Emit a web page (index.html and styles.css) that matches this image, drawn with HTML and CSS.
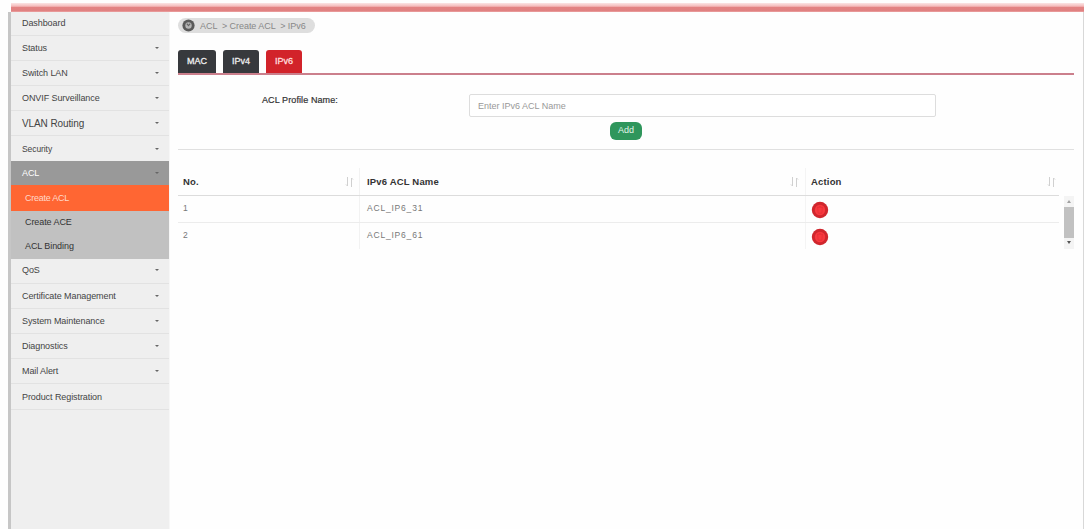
FILE: index.html
```html
<!DOCTYPE html>
<html lang="en">
<head>
    <meta charset="UTF-8">
    <meta name="viewport" content="width=device-width, initial-scale=1.0">
    <title>ACL - Create ACL - IPv6</title>
    <link rel="stylesheet" href="styles.css">
</head>
<body>
    <div class="page">
        <div class="topbar"></div>
        <div class="layout">
            <ul class="sidebar">
                <li class="first"><span>Dashboard</span></li>
                <li><span>Status</span><i class="caret"></i></li>
                <li><span>Switch LAN</span><i class="caret"></i></li>
                <li><span>ONVIF Surveillance</span><i class="caret"></i></li>
                <li class="large"><span>VLAN Routing</span><i class="caret"></i></li>
                <li class="small"><span>Security</span><i class="caret"></i></li>
                <li class="open"><span>ACL</span><i class="caret"></i></li>
                <li class="sub active"><span>Create ACL</span></li>
                <li class="sub"><span>Create ACE</span></li>
                <li class="sub"><span>ACL Binding</span></li>
                <li class="qos"><span>QoS</span><i class="caret"></i></li>
                <li><span>Certificate Management</span><i class="caret"></i></li>
                <li><span>System Maintenance</span><i class="caret"></i></li>
                <li><span>Diagnostics</span><i class="caret"></i></li>
                <li><span>Mail Alert</span><i class="caret"></i></li>
                <li class="last"><span>Product Registration</span></li>
            </ul>

            <div class="content">
                <div class="breadcrumb">
                    <svg width="13" height="13" viewBox="0 0 13 13">
                        <circle cx="6.5" cy="6.5" r="6.1" fill="#5a5a5a"/>
                        <circle cx="6.5" cy="6.5" r="3.2" fill="#b5b5b5"/>
                        <path d="M4.8 4.6l1.7 2 1.7-2" fill="none" stroke="#666" stroke-width="1.2"/>
                    </svg>
                    <span>ACL &nbsp;&gt; Create ACL &nbsp;&gt; IPv6</span>
                </div>

                <div class="tabs">
                    <a class="tab mac">MAC</a>
                    <a class="tab">IPv4</a>
                    <a class="tab current">IPv6</a>
                </div>

                <div class="profile-form">
                    <div class="form-row">
                        <label for="aclName">ACL Profile Name:</label>
                        <input id="aclName" type="text" placeholder="Enter IPv6 ACL Name">
                    </div>
                    <button class="add-btn">Add</button>
                </div>

                <div class="acl-table">
                    <div class="table-row table-head">
                        <div class="col-no">No.<svg class="sort" width="9" height="10" viewBox="0 0 9 10"><path d="M2.5 0v9M1 7.5l1.5 1.5M6.5 1v9M6.5 1l1.5 1.5"/></svg></div>
                        <div class="col-name">IPv6 ACL Name<svg class="sort" width="9" height="10" viewBox="0 0 9 10"><path d="M2.5 0v9M1 7.5l1.5 1.5M6.5 1v9M6.5 1l1.5 1.5"/></svg></div>
                        <div class="col-action">Action<svg class="sort" width="9" height="10" viewBox="0 0 9 10"><path d="M2.5 0v9M1 7.5l1.5 1.5M6.5 1v9M6.5 1l1.5 1.5"/></svg></div>
                    </div>
                    <div class="table-body">
                        <div class="rows">
                            <div class="table-row">
                                <div class="col-no">1</div>
                                <div class="col-name">ACL_IP6_31</div>
                                <div class="col-action">
                                    <svg class="delete" width="18" height="18" viewBox="0 0 18 18"><circle cx="9" cy="9" r="8.2" fill="#d0262d"/><circle cx="9" cy="9" r="5.2" fill="#f8383e"/><path d="M6 6.3h6M8 5.3h2M6.7 6.5l.4 5.7h3.8l.4-5.7" fill="none" stroke="#e02c33" stroke-width=".6"/></svg>
                                </div>
                            </div>
                            <div class="table-row">
                                <div class="col-no">2</div>
                                <div class="col-name">ACL_IP6_61</div>
                                <div class="col-action">
                                    <svg class="delete" width="18" height="18" viewBox="0 0 18 18"><circle cx="9" cy="9" r="8.2" fill="#d0262d"/><circle cx="9" cy="9" r="5.2" fill="#f8383e"/><path d="M6 6.3h6M8 5.3h2M6.7 6.5l.4 5.7h3.8l.4-5.7" fill="none" stroke="#e02c33" stroke-width=".6"/></svg>
                                </div>
                            </div>
                        </div>
                        <div class="scrollbar">
                            <i class="arrow-up"></i>
                            <i class="thumb"></i>
                            <i class="arrow-down"></i>
                        </div>
                    </div>
                </div>
            </div>
        </div>
    </div>
</body>
</html>
```
FILE: styles.css
```css
* {
    box-sizing: border-box;
}
body {
    margin: 0;
    background-color: #fefefe;
    font-family: "Liberation Sans", Arial, sans-serif;
    font-size: 9px;
    color: #444;
    overflow: hidden;
}
.page {
    height: 529px;
    padding-top: 3px;
    display: flex;
    flex-direction: column;
}
.topbar {
    flex: none;
    height: 9px;
    margin-left: 11px;
    background: linear-gradient(#fbe5e5 0, #f5bcbc 35%, #e38383 50%, #e08181 85%, #eda5a5 100%);
}
.layout {
    flex: 1;
    display: flex;
    margin-left: 8px;
    border-right: 1px solid #d8d8d8;
}

/* sidebar */
.sidebar {
    flex: none;
    width: 162px;
    margin: 0;
    padding: 0;
    list-style: none;
    background-color: #efefef;
    border-left: 3px solid #c6c6c6;
    border-right: 1px solid #f7f7f7;
}
.sidebar li {
    height: 25px;
    padding: 0 10px 0 11px;
    display: flex;
    align-items: center;
    justify-content: space-between;
    border-bottom: 1px solid #e2e2e2;
    letter-spacing: -0.08px;
    white-space: nowrap;
}
.sidebar li.first {
    height: 24px;
    padding-bottom: 2px;
}
.sidebar li.large {
    font-size: 10px;
    letter-spacing: -0.1px;
}
.sidebar li.small {
    font-size: 8.5px;
    border-bottom: none;
}
.sidebar li.open {
    height: 24px;
    background-color: #999;
    border-bottom: none;
    color: #fff;
}
.sidebar li.sub {
    height: 24px;
    padding-left: 14px;
    padding-bottom: 2px;
    background-color: #c1c1c1;
    border-bottom: none;
    color: #333;
}
.sidebar li.sub.active {
    height: 26px;
    padding-bottom: 1px;
    background-color: #ff6633;
    color: #ffd9c8;
    letter-spacing: -0.25px;
}
.sidebar li.qos {
    padding-bottom: 3px;
}
.sidebar li.last {
    height: 26px;
}
.caret {
    border-left: 2px solid transparent;
    border-right: 2px solid transparent;
    border-top: 2px solid #666;
}

/* content */
.content {
    flex: 1;
    padding: 6px 9px 0 8px;
}
.breadcrumb {
    width: 137px;
    height: 15px;
    padding-left: 4px;
    display: flex;
    align-items: center;
    gap: 5px;
    background-color: #dedede;
    border-radius: 8px;
    color: #888;
    font-size: 9px;
    letter-spacing: -0.05px;
    white-space: nowrap;
}
.tabs {
    height: 25px;
    margin-top: 17px;
    display: flex;
    gap: 7px;
    border-bottom: 2px solid #cb7f8c;
}
.tab {
    width: 36px;
    height: 23px;
    padding-bottom: 2px;
    display: flex;
    align-items: center;
    justify-content: center;
    background-color: #37393d;
    border-radius: 3px 3px 0 0;
    color: #eee;
    font-size: 9px;
    -webkit-text-stroke: 0.3px;
}
.tab.mac {
    width: 38px;
}
.tab.current {
    background-color: #d2232a;
    color: #ffdede;
}
.profile-form {
    height: 75px;
    padding-top: 19px;
    display: flex;
    flex-direction: column;
    border-bottom: 1px solid #e0e0e0;
}
.form-row {
    display: flex;
    padding-left: 84px;
}
.form-row label {
    width: 207px;
    padding-top: 1px;
    font-size: 9px;
    letter-spacing: 0.1px;
    color: #333;
    -webkit-text-stroke: 0.2px #333;
}
.form-row input {
    width: 467px;
    height: 23px;
    padding: 0 8px;
    border: 1px solid #ddd;
    border-radius: 2px;
    background-color: #fff;
    font-family: inherit;
    font-size: 9px;
    color: #444;
}
.form-row input::placeholder {
    color: #999;
}
.add-btn {
    width: 32px;
    height: 18px;
    margin: 5px 0 0 432px;
    padding: 0 0 2px;
    border: none;
    border-radius: 6px;
    background-color: #2f965c;
    color: #e2f5e9;
    font-family: inherit;
    font-size: 9px;
}

/* table */
.acl-table {
    margin-top: 18px;
}
.table-row {
    width: 881px;
    height: 27px;
    display: flex;
    border-bottom: 1px solid #ececec;
    font-size: 8.5px;
    color: #777;
}
.table-row > div {
    display: flex;
    align-items: center;
    justify-content: space-between;
}
.table-head {
    height: 28px;
    border-bottom-color: #dcdcdc;
    color: #333;
    font-size: 9.5px;
    font-weight: bold;
    letter-spacing: 0.17px;
}
.table-row .col-no {
    width: 182px;
    padding: 0 5px;
    border-right: 1px solid #f2f2f2;
}
.table-row .col-name {
    width: 446px;
    padding: 0 6px 0 7px;
    border-right: 1px solid #f4f4f4;
}
.table-row .col-action {
    flex: 1;
    padding: 0 3px 0 5px;
}
.sort {
    fill: none;
    stroke: #d0d0d0;
    stroke-width: 1;
}
.table-body {
    display: flex;
    gap: 5px;
}
.rows .table-row:last-child {
    border-bottom-color: transparent;
}
.table-body .col-no,
.table-body .col-name {
    padding-bottom: 2px;
}
.table-body .col-name {
    letter-spacing: 0.8px;
}
.table-body .col-action {
    padding-top: 1px;
}
.scrollbar {
    width: 10px;
    height: 53px;
    padding: 4px 0 5px;
    display: flex;
    flex-direction: column;
    align-items: center;
    justify-content: space-between;
    background-color: #f4f4f4;
}
.thumb {
    width: 10px;
    height: 31px;
    background-color: #c1c1c1;
}
.arrow-up {
    border-left: 2px solid transparent;
    border-right: 2px solid transparent;
    border-bottom: 3px solid #a0a0a0;
}
.arrow-down {
    border-left: 2px solid transparent;
    border-right: 2px solid transparent;
    border-top: 3px solid #555;
}
```
